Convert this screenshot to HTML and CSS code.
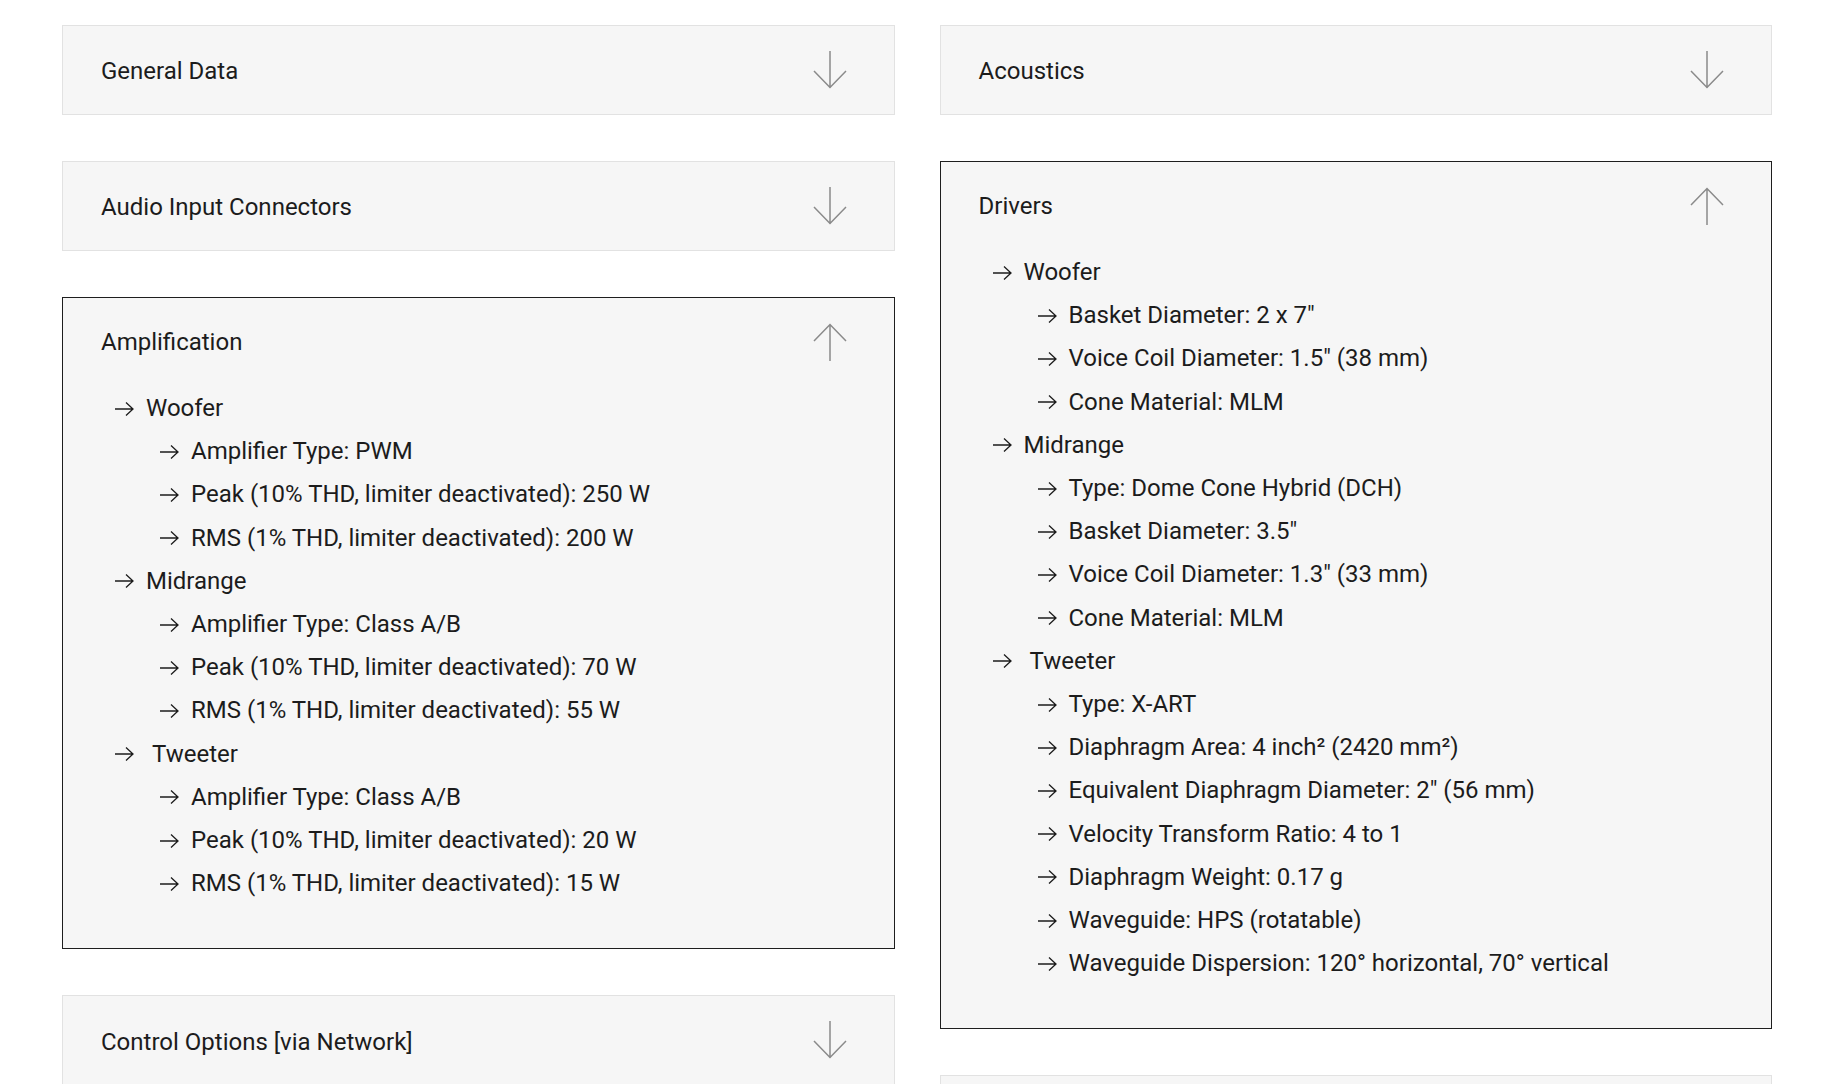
FILE: index.html
```html
<!DOCTYPE html>
<html lang="en">
<head>
  <meta charset="UTF-8" />
  <meta name="viewport" content="width=device-width, initial-scale=1" />
  <title>Technical Specifications</title>
  <link rel="stylesheet" href="styles.css">
</head>
<body>

<main class="specs">

  <!-- linke Spalte -->
  <div class="spec-col">
    <section class="spec-box">
      <div class="spec-head">
        <span>General Data</span>
        <svg class="toggle" viewBox="0 0 34 38"><path d="M17 0V37M1 20L17 36.5L33 20"/></svg>
      </div>
    </section>

    <section class="spec-box">
      <div class="spec-head">
        <span>Audio Input Connectors</span>
        <svg class="toggle" viewBox="0 0 34 38"><path d="M17 0V37M1 20L17 36.5L33 20"/></svg>
      </div>
    </section>

    <section class="spec-box open">
      <div class="spec-head">
        <span>Amplification</span>
        <svg class="toggle" viewBox="0 0 34 38"><path d="M17 38V1M1 18L17 1.5L33 18"/></svg>
      </div>
      <ul class="spec-list">
        <li class="lvl1"><i class="arr"></i>Woofer</li>
        <li class="lvl2"><i class="arr"></i>Amplifier Type: PWM</li>
        <li class="lvl2"><i class="arr"></i>Peak (10% THD, limiter deactivated): 250 W</li>
        <li class="lvl2"><i class="arr"></i>RMS (1% THD, limiter deactivated): 200 W</li>
        <li class="lvl1"><i class="arr"></i>Midrange</li>
        <li class="lvl2"><i class="arr"></i>Amplifier Type: Class A/B</li>
        <li class="lvl2"><i class="arr"></i>Peak (10% THD, limiter deactivated): 70 W</li>
        <li class="lvl2"><i class="arr"></i>RMS (1% THD, limiter deactivated): 55 W</li>
        <li class="lvl1 wide"><i class="arr"></i>Tweeter</li>
        <li class="lvl2"><i class="arr"></i>Amplifier Type: Class A/B</li>
        <li class="lvl2"><i class="arr"></i>Peak (10% THD, limiter deactivated): 20 W</li>
        <li class="lvl2"><i class="arr"></i>RMS (1% THD, limiter deactivated): 15 W</li>
      </ul>
    </section>

    <section class="spec-box">
      <div class="spec-head">
        <span>Control Options [via Network]</span>
        <svg class="toggle" viewBox="0 0 34 38"><path d="M17 0V37M1 20L17 36.5L33 20"/></svg>
      </div>
    </section>
  </div>

  <!-- rechte Spalte -->
  <div class="spec-col">
    <section class="spec-box">
      <div class="spec-head">
        <span>Acoustics</span>
        <svg class="toggle" viewBox="0 0 34 38"><path d="M17 0V37M1 20L17 36.5L33 20"/></svg>
      </div>
    </section>

    <section class="spec-box open">
      <div class="spec-head">
        <span>Drivers</span>
        <svg class="toggle" viewBox="0 0 34 38"><path d="M17 38V1M1 18L17 1.5L33 18"/></svg>
      </div>
      <ul class="spec-list">
        <li class="lvl1"><i class="arr"></i>Woofer</li>
        <li class="lvl2"><i class="arr"></i>Basket Diameter: 2 x 7″</li>
        <li class="lvl2"><i class="arr"></i>Voice Coil Diameter: 1.5″ (38 mm)</li>
        <li class="lvl2"><i class="arr"></i>Cone Material: MLM</li>
        <li class="lvl1"><i class="arr"></i>Midrange</li>
        <li class="lvl2"><i class="arr"></i>Type: Dome Cone Hybrid (DCH)</li>
        <li class="lvl2"><i class="arr"></i>Basket Diameter: 3.5″</li>
        <li class="lvl2"><i class="arr"></i>Voice Coil Diameter: 1.3″ (33 mm)</li>
        <li class="lvl2"><i class="arr"></i>Cone Material: MLM</li>
        <li class="lvl1 wide"><i class="arr"></i>Tweeter</li>
        <li class="lvl2"><i class="arr"></i>Type: X-ART</li>
        <li class="lvl2"><i class="arr"></i>Diaphragm Area: 4 inch² (2420 mm²)</li>
        <li class="lvl2"><i class="arr"></i>Equivalent Diaphragm Diameter: 2″ (56 mm)</li>
        <li class="lvl2"><i class="arr"></i>Velocity Transform Ratio: 4 to 1</li>
        <li class="lvl2"><i class="arr"></i>Diaphragm Weight: 0.17 g</li>
        <li class="lvl2"><i class="arr"></i>Waveguide: HPS (rotatable)</li>
        <li class="lvl2"><i class="arr"></i>Waveguide Dispersion: 120° horizontal, 70° vertical</li>
      </ul>
    </section>

    <!-- nächste Box, nur oberer Rand sichtbar -->
    <section class="spec-box">
      <div class="spec-head">
        <span></span>
        <svg class="toggle" viewBox="0 0 34 38"><path d="M17 0V37M1 20L17 36.5L33 20"/></svg>
      </div>
    </section>
  </div>

</main>

</body>
</html>
```

FILE: styles.css
```css
* {
  box-sizing: border-box;
}
body {
  margin: 0;
  font-family: Roboto, "Liberation Sans", Arial, sans-serif;
  background: #fff;
  color: #1c1c1c;
}

.specs {
  display: grid;
  grid-template-columns: 1fr 1fr;
  column-gap: 45px;
  padding: 25px 64px 40px 62px;
  align-items: start;
}

.spec-col {
  display: flex;
  flex-direction: column;
  gap: 46px;
}

.spec-box {
  background: #f6f6f6;
  border: 1px solid #e2e2e2;
}
.spec-box.open {
  border-color: #1e1e1e;
}

.spec-head {
  height: 88px;
  display: flex;
  align-items: center;
  justify-content: space-between;
  padding: 0 47px 0 38px;
  font-size: 24px;
  line-height: 43.2px;
}
.spec-head span {
  padding-top: 4px;
}
.spec-box.open .spec-head span {
  padding-top: 2px;
}

.toggle {
  width: 34px;
  height: 38px;
  fill: none;
  stroke: #8a8a8a;
  stroke-width: 1.5;
}

.spec-list {
  list-style: none;
  margin: 0;
  padding: 1px 20px 43px 52px;
  font-size: 24px;
  line-height: 43.2px;
}
.spec-list li {
  display: flex;
  align-items: center;
  white-space: nowrap;
}
.spec-list li.lvl2 {
  padding-left: 45px;
}

/* kleiner Pfeil vor jedem Eintrag */
.arr {
  width: 19px;
  height: 14px;
  margin-right: 12px;
  flex-shrink: 0;
  background: url("data:image/svg+xml;utf8,<svg xmlns='http://www.w3.org/2000/svg' viewBox='0 0 19 14'><path d='M0 7H18M11 0.5L18 7L11 13.5' fill='none' stroke='%231c1c1c' stroke-width='1.3'/></svg>") no-repeat center / contain;
}
.spec-list li.wide .arr {
  margin-right: 18px;
}
```
